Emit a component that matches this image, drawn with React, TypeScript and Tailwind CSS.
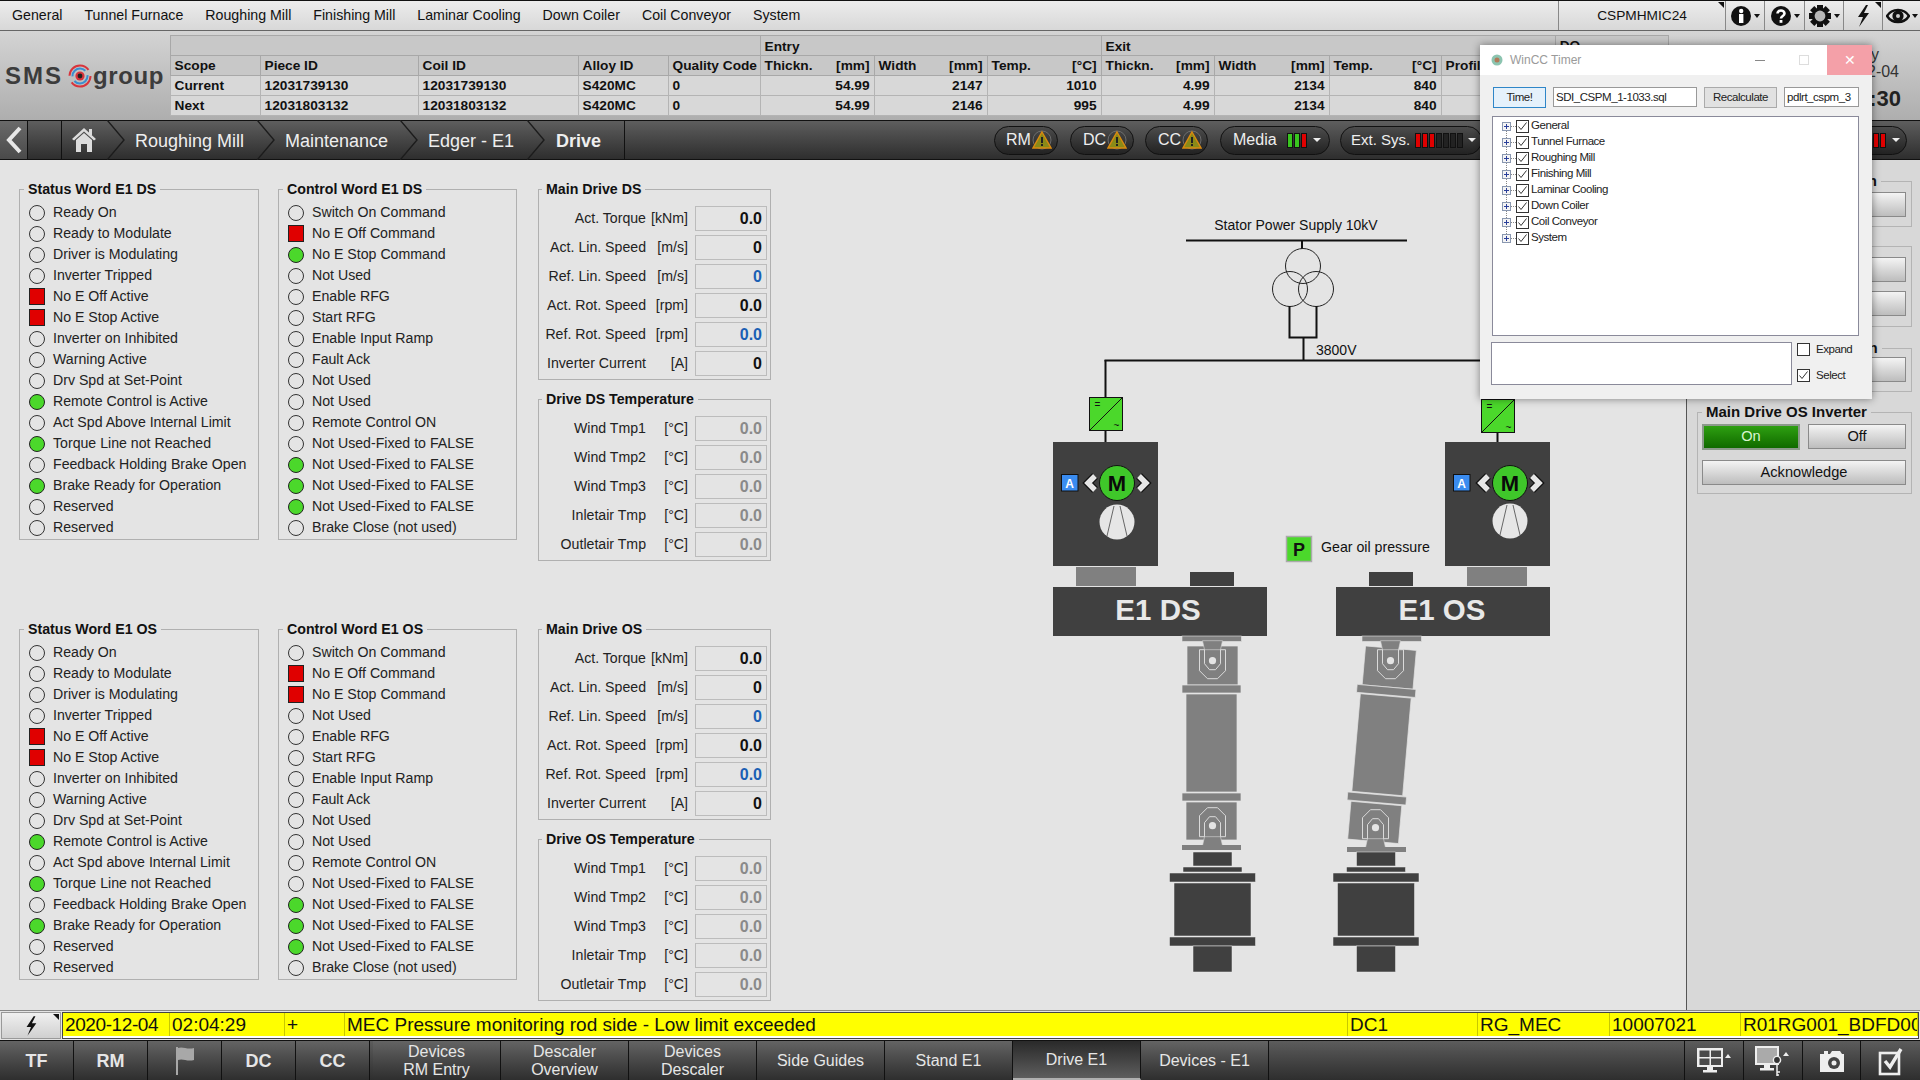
import React from "react";

type State = "off" | "red" | "green";
type Row = [string, State];

const menuItems = ["General", "Tunnel Furnace", "Roughing Mill", "Finishing Mill", "Laminar Cooling", "Down Coiler", "Coil Conveyor", "System"];

const statusRows = (limit: string): Row[] => [
  ["Ready On", "off"],
  ["Ready to Modulate", "off"],
  ["Driver is Modulating", "off"],
  ["Inverter Tripped", "off"],
  ["No E Off Active", "red"],
  ["No E Stop Active", "red"],
  ["Inverter on Inhibited", "off"],
  ["Warning Active", "off"],
  ["Drv Spd at Set-Point", "off"],
  ["Remote Control is Active", "green"],
  [limit, "off"],
  ["Torque Line not Reached", "green"],
  ["Feedback Holding Brake Open", "off"],
  ["Brake Ready for Operation", "green"],
  ["Reserved", "off"],
  ["Reserved", "off"],
];

const controlRows = (eStop: State): Row[] => [
  ["Switch On Command", "off"],
  ["No E Off Command", "red"],
  ["No E Stop Command", eStop],
  ["Not Used", "off"],
  ["Enable RFG", "off"],
  ["Start RFG", "off"],
  ["Enable Input Ramp", "off"],
  ["Fault Ack", "off"],
  ["Not Used", "off"],
  ["Not Used", "off"],
  ["Remote Control ON", "off"],
  ["Not Used-Fixed to FALSE", "off"],
  ["Not Used-Fixed to FALSE", "green"],
  ["Not Used-Fixed to FALSE", "green"],
  ["Not Used-Fixed to FALSE", "green"],
  ["Brake Close (not used)", "off"],
];

const driveRows = [
  { label: "Act. Torque", unit: "[kNm]", value: "0.0", tone: "text-[#111]" },
  { label: "Act. Lin. Speed", unit: "[m/s]", value: "0", tone: "text-[#111]" },
  { label: "Ref. Lin. Speed", unit: "[m/s]", value: "0", tone: "text-[#1a5fb4]" },
  { label: "Act. Rot. Speed", unit: "[rpm]", value: "0.0", tone: "text-[#111]" },
  { label: "Ref. Rot. Speed", unit: "[rpm]", value: "0.0", tone: "text-[#1a5fb4]" },
  { label: "Inverter Current", unit: "[A]", value: "0", tone: "text-[#111]" },
];

const tempRows = ["Wind Tmp1", "Wind Tmp2", "Wind Tmp3", "Inletair Tmp", "Outletair Tmp"].map((label) => ({
  label,
  unit: "[°C]",
  value: "0.0",
  tone: "text-[#8a8a8a]",
}));

const treeItems = ["General", "Tunnel Furnace", "Roughing Mill", "Finishing Mill", "Laminar Cooling", "Down Coiler", "Coil Conveyor", "System"];

function Indicator({ state }: { state: State }) {
  if (state === "red") return <span className="block w-[16px] h-[17px] bg-[#e00000] border border-[#222]" />;
  if (state === "green") return <span className="block w-[16px] h-[16px] rounded-full bg-[#4bd82b] border border-[#222]" />;
  return <span className="block w-[16px] h-[16px] rounded-full border border-[#333]" />;
}

function WordGroup({ title, rows, width }: { title: string; rows: Row[]; width: string }) {
  return (
    <fieldset className={`${width} h-[359px] border border-[#b0b0b0] px-[9px]`}>
      <legend className="-ml-[5px] px-[4px] h-[16px] leading-[16px] text-[14.2px] font-bold text-[#111]">{title}</legend>
      <div className="flex flex-col pt-[5px]">
        {rows.map(([label, state], i) => (
          <div key={i} className="flex items-center h-[21px] gap-[8px] text-[14.15px] text-[#222] whitespace-nowrap">
            <Indicator state={state} />
            <span>{label}</span>
          </div>
        ))}
      </div>
    </fieldset>
  );
}

function ValueGroup({ title, rows, height }: { title: string; rows: { label: string; unit: string; value: string; tone: string }[]; height: string }) {
  return (
    <fieldset className={`w-[233px] ${height} border border-[#b0b0b0]`}>
      <legend className="ml-[3px] px-[4px] h-[16px] leading-[16px] text-[14.2px] font-bold text-[#111]">{title}</legend>
      <div className="flex flex-col gap-[4px] pt-[9px]">
        {rows.map((r) => (
          <div key={r.label} className="flex items-center h-[25px] text-[14.15px] text-[#222] whitespace-nowrap">
            <span className="w-[107px] text-right">{r.label}</span>
            <span className="w-[42px] text-right">{r.unit}</span>
            <span className={`ml-[7px] w-[72px] h-[25px] leading-[24px] border border-[#bcbcbc] pr-[4px] text-right text-[16px] font-bold ${r.tone}`}>{r.value}</span>
          </div>
        ))}
      </div>
    </fieldset>
  );
}

function DriveSection({ side, limit, eStop }: { side: string; limit: string; eStop: State }) {
  return (
    <div className="flex h-[440px]">
      <WordGroup title={`Status Word E1 ${side}`} rows={statusRows(limit)} width="w-[240px]" />
      <div className="ml-[19px]">
        <WordGroup title={`Control Word E1 ${side}`} rows={controlRows(eStop)} width="w-[239px]" />
      </div>
      <div className="ml-[21px] flex flex-col gap-[11px]">
        <ValueGroup title={`Main Drive ${side}`} rows={driveRows} height="h-[199px]" />
        <ValueGroup title={`Drive ${side} Temperature`} rows={tempRows} height="h-[170px]" />
      </div>
    </div>
  );
}

function Joint({ x, y, flip }: { x: number; y: number; flip?: boolean }) {
  return (
    <g transform={`translate(${x} ${y}) scale(1 ${flip ? -1 : 1})`}>
      <polygon points="-10,-20 10,-20 8,-11 -8,-11" fill="#808080" stroke="#d8d8d8" strokeWidth="0.6" />
      <path d="M-13,-11 L-13,10 L-5,18 L5,18 L13,10 L13,-11 L8,-11 L8,3 L3,9 L-3,9 L-8,3 L-8,-11 Z" fill="none" stroke="#e4e4e4" strokeWidth="0.9" />
      <circle cx="0" cy="0" r="3.6" fill="#e4e4e4" />
    </g>
  );
}

// body of the cardan shaft, drawn at the DS position, the OS one gets tilted
function ShaftBody() {
  return (
    <g fill="#808080" stroke="#e4e4e4" strokeWidth="0.7">
      <rect x="1187" y="646" width="51" height="39" />
      <rect x="1182" y="685" width="59" height="8" />
      <rect x="1186" y="694" width="51" height="98" />
      <rect x="1182" y="793" width="59" height="8" />
      <rect x="1186" y="802" width="51" height="38" />
    </g>
  );
}

function DarkStack({ cx }: { cx: number }) {
  const parts: [number, number, number][] = [
    [39, 852, 14],
    [59, 867, 5],
    [86, 873, 9],
    [77, 883, 53],
    [86, 937, 9],
    [39, 946, 26],
  ];
  return (
    <g fill="#404040" stroke="#ececec" strokeWidth="0.5">
      {parts.map(([w, y, h]) => (
        <rect key={y} x={cx - w / 2} y={y} width={w} height={h} />
      ))}
    </g>
  );
}

function MotorUnit({ boxX, conv, convY, motor, fanY, tap }: { boxX: number; conv: number; convY: number; motor: number; fanY: number; tap: number }) {
  return (
    <g>
      <line x1={tap} y1="360" x2={tap} y2={convY} stroke="#111" strokeWidth="2" />
      <line x1={tap} y1={convY + 33} x2={tap} y2="442" stroke="#111" strokeWidth="2" />
      <rect x={conv} y={convY} width="33" height="33" fill="#4bd82b" stroke="#111" strokeWidth="1" />
      <line x1={conv} y1={convY + 33} x2={conv + 33} y2={convY} stroke="#111" strokeWidth="1" />
      <text x={conv + 8} y={convY + 10} fontSize="10" textAnchor="middle" fill="#111">=</text>
      <text x={conv + 27} y={convY + 31} fontSize="10" textAnchor="middle" fill="#111">~</text>
      <rect x={boxX} y="442" width="105" height="124" fill="#404040" />
      <rect x={boxX + 8.5} y="474.5" width="16.5" height="16.5" fill="#3a8cf0" stroke="#111" />
      <text x={boxX + 16.7} y="487.5" fontSize="12" fontWeight="700" textAnchor="middle" fill="#fff">A</text>
      <path d={`M${motor - 22},476 L${motor - 29},483 L${motor - 22},490`} fill="none" stroke="#111" strokeWidth="8" />
      <path d={`M${motor - 22},476 L${motor - 29},483 L${motor - 22},490`} fill="none" stroke="#e6e6e6" strokeWidth="5.4" />
      <path d={`M${motor + 22},476 L${motor + 29},483 L${motor + 22},490`} fill="none" stroke="#111" strokeWidth="8" />
      <path d={`M${motor + 22},476 L${motor + 29},483 L${motor + 22},490`} fill="none" stroke="#e6e6e6" strokeWidth="5.4" />
      <circle cx={motor} cy="483" r="17.5" fill="#3fc72a" stroke="#111" />
      <text x={motor} y="491" fontSize="22" fontWeight="700" textAnchor="middle" fill="#0a0a0a">M</text>
      <circle cx={motor} cy={fanY} r="17.5" fill="#e6e6e6" />
      <path d={`M${motor - 3},${fanY - 16} L${motor - 10},${fanY + 14} M${motor + 3},${fanY - 16} L${motor + 10},${fanY + 14}`} stroke="#666" strokeWidth="1" fill="none" />
    </g>
  );
}

function Diagram() {
  return (
    <svg className="block shrink-0" width="915" height="850" viewBox="771 160 915 850" fontFamily="'Liberation Sans', Arial, sans-serif">
      <text x="1296" y="230" fontSize="14" textAnchor="middle" fill="#111">Stator Power Supply 10kV</text>
      <line x1="1186" y1="240.5" x2="1407" y2="240.5" stroke="#111" strokeWidth="2" />
      <line x1="1302" y1="240" x2="1302" y2="249" stroke="#111" strokeWidth="2" />
      <g fill="none" stroke="#222" strokeWidth="1">
        <circle cx="1303" cy="266" r="17.5" />
        <circle cx="1290" cy="289" r="17.5" />
        <circle cx="1316" cy="289" r="17.5" />
      </g>
      <path d="M1289.5,306 L1289.5,337.5 L1316.5,337.5 L1316.5,306" fill="none" stroke="#111" strokeWidth="2" />
      <line x1="1303.5" y1="337" x2="1303.5" y2="360" stroke="#111" strokeWidth="2" />
      <line x1="1104.5" y1="360.5" x2="1498" y2="360.5" stroke="#111" strokeWidth="2" />
      <text x="1316" y="355" fontSize="14" fill="#111">3800V</text>

      <MotorUnit boxX={1053} conv={1089.5} convY={397.5} motor={1117} fanY={522} tap={1105.5} />
      <MotorUnit boxX={1445} conv={1481.5} convY={399.5} motor={1510} fanY={521} tap={1497.5} />

      <rect x="1286.5" y="536.5" width="25" height="25" fill="#4bd82b" stroke="#aaa" strokeWidth="1.5" />
      <text x="1299" y="556" fontSize="18" fontWeight="700" textAnchor="middle" fill="#111">P</text>
      <text x="1321" y="552" fontSize="14.2" fill="#111">Gear oil pressure</text>

      <rect x="1076" y="567" width="60" height="19" fill="#808080" />
      <rect x="1190" y="572" width="44" height="14" fill="#404040" />
      <rect x="1369" y="572" width="44" height="14" fill="#404040" />
      <rect x="1467" y="567" width="60" height="19" fill="#808080" />
      <rect x="1053" y="587" width="214" height="49" fill="#404040" />
      <rect x="1336" y="587" width="214" height="49" fill="#404040" />
      <text x="1158" y="620" fontSize="29.5" fontWeight="700" textAnchor="middle" fill="#e8e8e8">E1 DS</text>
      <text x="1442" y="620" fontSize="29.5" fontWeight="700" textAnchor="middle" fill="#e8e8e8">E1 OS</text>

      <rect x="1182" y="636" width="59.5" height="5.5" fill="#808080" stroke="#e8e8e8" strokeWidth="0.6" />
      <ShaftBody />
      <Joint x={1212.5} y={660.7} />
      <Joint x={1212.5} y={825.7} flip />
      <rect x="1182" y="845" width="59" height="5" fill="#808080" />
      <DarkStack cx={1212.5} />

      <rect x="1362" y="636" width="59.5" height="5.5" fill="#808080" stroke="#e8e8e8" strokeWidth="0.6" />
      <g transform="translate(1382.5 745) rotate(5) translate(-1212.5 -743.2)">
        <ShaftBody />
      </g>
      <Joint x={1390.5} y={660.7} />
      <Joint x={1375.5} y={827.7} flip />
      <rect x="1347" y="847" width="59" height="5" fill="#808080" />
      <DarkStack cx={1376} />
    </svg>
  );
}

function GrayButton({ label, className }: { label: string; className: string }) {
  return (
    <div className={`${className} h-[25px] flex items-center justify-center border border-[#8a8a8a] bg-linear-to-b from-[#f4f4f4] to-[#bdbdbd] text-[14.6px] text-[#111]`}>
      {label}
    </div>
  );
}

function SideGroup({ title, height, mt, legendClass, children }: { title: string; height: string; mt: string; legendClass: string; children: React.ReactNode }) {
  return (
    <fieldset className={`w-[215px] ${height} ${mt} border border-[#b4b4b4] pl-[4px] pr-[5px]`}>
      <legend className={`${legendClass} px-[4px] h-[16px] leading-[16px] text-[15px] font-bold text-[#111] whitespace-nowrap`}>{title}</legend>
      {children}
    </fieldset>
  );
}

function RightPanel() {
  return (
    <div className="w-[234px] h-full border-l border-[#555] bg-[#d8d8d8] pl-[10px] pt-[13px]">
      <SideGroup title="Main Drive DS Operation" height="h-[54px]" mt="mt-0" legendClass="-ml-[5px]">
        <GrayButton label="On" className="w-[204px] mt-[3px]" />
      </SideGroup>
      <SideGroup title="Main Drive DS Inverter" height="h-[89px]" mt="mt-[11px]" legendClass="ml-0">
        <div className="flex flex-col gap-[9px] pt-[3px]">
          <GrayButton label="On" className="w-[204px]" />
          <GrayButton label="Off" className="w-[204px]" />
        </div>
      </SideGroup>
      <SideGroup title="Main Drive OS Operation" height="h-[52px]" mt="mt-[13px]" legendClass="-ml-[5px]">
        <GrayButton label="On" className="w-[204px] mt-[1px]" />
      </SideGroup>
      <SideGroup title="Main Drive OS Inverter" height="h-[90px]" mt="mt-[12px]" legendClass="ml-0">
        <div className="flex gap-[8px] pt-[4px]">
          <div className="w-[98px] h-[26px] flex items-center justify-center border-2 border-[#8c9a8c] bg-linear-to-b from-[#2ea012] to-[#0f6a00] text-[14.6px] text-[#d9f5d0]">On</div>
          <GrayButton label="Off" className="w-[98px]" />
        </div>
        <GrayButton label="Acknowledge" className="w-[204px] mt-[10px]" />
      </SideGroup>
    </div>
  );
}

function Corner() {
  return <span className="absolute top-[1px] right-[1px] w-0 h-0 border-l-[6px] border-l-transparent border-t-[6px] border-t-[#111]" />;
}

function TopIcon({ children, width }: { children: React.ReactNode; width: string }) {
  return <div className={`${width} relative flex items-center justify-center gap-[2px] border-l border-[#888] bg-linear-to-b from-[#ececec] to-[#d4d4d4]`}>{children}</div>;
}

function MiniArrow() {
  return <span className="w-0 h-0 border-x-[3px] border-x-transparent border-t-[4px] border-t-[#111]" />;
}

function MenuBar() {
  return (
    <div className="h-[31px] flex border-t border-[#111] border-b border-b-[#666] bg-linear-to-b from-[#ececec] to-[#d8d8d8] text-[14.2px] text-[#111]">
      <div className="w-[1558px] flex items-center pl-[12px] pt-[1px] gap-[22px] whitespace-nowrap">
        {menuItems.map((m) => (
          <span key={m}>{m}</span>
        ))}
      </div>
      <div className="w-[167px] relative flex items-center justify-center pt-[1px] text-[13.7px] border-l border-[#888]">
        CSPMHMIC24
        <Corner />
      </div>
      <TopIcon width="w-[39px]">
        <svg width="22" height="22" viewBox="0 0 22 22">
          <circle cx="11" cy="11" r="10" fill="#111" />
          <rect x="9" y="9" width="4.4" height="9" fill="#fff" />
          <circle cx="11.2" cy="6" r="2.2" fill="#fff" />
        </svg>
        <MiniArrow />
      </TopIcon>
      <TopIcon width="w-[40px]">
        <svg width="22" height="22" viewBox="0 0 22 22">
          <circle cx="11" cy="11" r="10" fill="#111" />
          <path d="M7.5,8.5 C7.5,4.5 14.5,4.5 14.5,8.5 C14.5,11 11,11 11,13.5" fill="none" stroke="#fff" strokeWidth="2.6" />
          <rect x="9.6" y="15" width="2.8" height="2.8" fill="#fff" />
        </svg>
        <MiniArrow />
      </TopIcon>
      <TopIcon width="w-[39px]">
        <svg width="24" height="24" viewBox="0 0 24 24">
          <g fill="#111">
            {[0, 45, 90, 135].map((a) => (
              <rect key={a} x="9" y="1" width="6" height="22" transform={`rotate(${a} 12 12)`} />
            ))}
          </g>
          <circle cx="12" cy="12" r="8" fill="#111" />
          <circle cx="12" cy="12" r="5.4" fill="#b8b8b8" />
        </svg>
        <MiniArrow />
      </TopIcon>
      <TopIcon width="w-[39px]">
        <svg width="18" height="24" viewBox="0 0 18 24">
          <path d="M12,1 L4,13 L9,13 L5,23 L15,9 L10,9 L14,1 Z" fill="#111" />
        </svg>
        <Corner />
      </TopIcon>
      <TopIcon width="w-[38px]">
        <svg width="24" height="18" viewBox="0 0 24 18">
          <path d="M1,9 C6,1 18,1 23,9 C18,17 6,17 1,9 Z" fill="none" stroke="#111" strokeWidth="2.4" />
          <circle cx="12" cy="9" r="5.6" fill="#111" />
          <circle cx="12" cy="9" r="2" fill="#ccc" />
        </svg>
        <MiniArrow />
      </TopIcon>
    </div>
  );
}

function LogoMark() {
  return (
    <svg width="24" height="24" viewBox="0 0 24 24" className="shrink-0">
      <circle cx="12" cy="12" r="10.5" fill="none" stroke="#d8343c" strokeWidth="2" strokeDasharray="26 7" />
      <circle cx="12" cy="12" r="7.5" fill="none" stroke="#3a8fd0" strokeWidth="2" strokeDasharray="18 5" />
      <circle cx="12" cy="12" r="4.6" fill="#d8343c" />
      <circle cx="12" cy="12" r="2.4" fill="#222" />
    </svg>
  );
}

const tableCols = [90, 158, 160, 90, 92, 114, 113, 114, 113, 115, 112, 114, 113];

function Th({ label, unit, className = "" }: { label: string; unit?: string; className?: string }) {
  return (
    <th className={`border border-[#a8a8a8] bg-[#c8c8c8] px-[4px] h-[20px] font-bold text-left overflow-hidden whitespace-nowrap ${className}`}>
      {unit ? (
        <span className="flex justify-between">
          <span>{label}</span>
          <span>{unit}</span>
        </span>
      ) : (
        label
      )}
    </th>
  );
}

function Td({ v, right }: { v?: string; right?: boolean }) {
  return <td className={`border border-[#b4b4b4] bg-[#d8d8d8] px-[4px] h-[20px] font-bold whitespace-nowrap ${right ? "text-right" : "text-left"}`}>{v}</td>;
}

function ProcessTable() {
  const rows = [
    ["Current", "12031739130", "12031739130", "S420MC", "0", "54.99", "2147", "1010", "4.99", "2134", "840"],
    ["Next", "12031803132", "12031803132", "S420MC", "0", "54.99", "2146", "995", "4.99", "2134", "840"],
  ];
  return (
    <table className="table-fixed border-collapse w-[1498px] h-fit text-[13.7px] leading-[15px] text-[#111]">
      <colgroup>
        {tableCols.map((w, i) => (
          <col key={i} span={1} style={{ width: w }} />
        ))}
      </colgroup>
      <tbody>
        <tr>
          <Th label="" className="border-r-0" />
          <Th label="" className="border-x-0" />
          <Th label="" className="border-x-0" />
          <Th label="" className="border-x-0" />
          <Th label="" className="border-l-0" />
          <th colSpan={3} className="border border-[#a8a8a8] bg-[#c8c8c8] px-[4px] pt-[2px] font-bold text-left">Entry</th>
          <th colSpan={4} className="border border-[#a8a8a8] bg-[#c8c8c8] px-[4px] pt-[2px] font-bold text-left">Exit</th>
          <Th label="DQ" />
        </tr>
        <tr>
          <Th label="Scope" className="border-[#808080]" />
          <Th label="Piece ID" />
          <Th label="Coil ID" />
          <Th label="Alloy ID" />
          <Th label="Quality Code" />
          <Th label="Thickn." unit="[mm]" />
          <Th label="Width" unit="[mm]" />
          <Th label="Temp." unit="[°C]" />
          <Th label="Thickn." unit="[mm]" />
          <Th label="Width" unit="[mm]" />
          <Th label="Temp." unit="[°C]" />
          <Th label="Profile" />
          <Th label="" />
        </tr>
        {rows.map((r) => (
          <tr key={r[0]}>
            {r.map((v, i) => (
              <Td key={i} v={v} right={i > 4} />
            ))}
            <Td />
            <Td />
          </tr>
        ))}
      </tbody>
    </table>
  );
}

function Header() {
  return (
    <div className="h-[89px] flex items-start bg-linear-to-b from-[#d4d4d4] to-[#aeaeae] pt-[4px]">
      <div className="w-[170px] h-[85px] flex items-center pl-[5px] pb-[4px] text-[24px] font-bold text-[#3c3c3c]">
        <span className="w-[63px] tracking-[2px]">SMS</span>
        <LogoMark />
        <span className="ml-[1px] tracking-[0.6px]">group</span>
      </div>
      <ProcessTable />
      <div className="w-[252px] pr-[19px] text-right text-[#333]">
        <div className="text-[16px] leading-[20px] pt-[10px] pr-[22px]">Friday</div>
        <div className="text-[16px] leading-[20px] -mt-[3px] pr-[2px]">2020-12-04</div>
        <div className="text-[22px] leading-[28px] font-bold text-[#222] mt-[3px]">02:04:30</div>
      </div>
    </div>
  );
}

function Crumb({ label, width, bold }: { label: string; width: string; bold?: boolean }) {
  return <div className={`${width} pl-[10px] pt-[2px] flex items-center text-[18px] text-[#eeeeee] whitespace-nowrap ${bold ? "font-bold" : ""}`}>{label}</div>;
}

function Chevron() {
  return (
    <svg width="18" height="40" viewBox="0 0 18 40" className="shrink-0">
      <path d="M0,0 L17,20 L0,40" fill="none" stroke="#1c1c1c" strokeWidth="1.4" />
    </svg>
  );
}

function WarnTriangle() {
  return (
    <svg width="20" height="20" viewBox="0 0 20 20" className="shrink-0">
      <circle cx="10" cy="10" r="9" fill="none" stroke="#777" strokeWidth="0.8" />
      <polygon points="10,2 19,18 1,18" fill="#8a8a18" stroke="#d98a10" strokeWidth="1.4" />
      <rect x="9" y="7" width="2" height="6" fill="#222" />
      <rect x="9" y="14" width="2" height="2" fill="#222" />
    </svg>
  );
}

function Bars({ colors }: { colors: string[] }) {
  return (
    <span className="flex gap-[1px]">
      {colors.map((c, i) => (
        <span key={i} className={`block w-[6px] h-[15px] border border-[#111] ${c}`} />
      ))}
    </span>
  );
}

function WhiteArrow() {
  return <span className="w-0 h-0 border-x-[4px] border-x-transparent border-t-[4px] border-t-[#eee]" />;
}

function Pill({ className, children }: { className: string; children: React.ReactNode }) {
  return (
    <div className={`${className} h-[29px] flex items-center rounded-full border border-[#111] bg-linear-to-b from-[#4c4c4c] to-[#222] text-[16px] text-[#eeeeee] whitespace-nowrap`}>
      {children}
    </div>
  );
}

function Breadcrumb() {
  return (
    <div className="h-[40px] flex items-center border-y border-[#111] bg-linear-to-b from-[#5e5e5e] to-[#2e2e2e]">
      <div className="w-[28px] h-full flex items-center justify-center border-r border-[#111] bg-linear-to-b from-[#6a6a6a] to-[#4a4a4a]">
        <svg width="18" height="28" viewBox="0 0 18 28">
          <path d="M15,2 L4,14 L15,26" fill="none" stroke="#e8e8e8" strokeWidth="4" />
        </svg>
      </div>
      <div className="w-[34px] h-full border-r border-[#111]" />
      <div className="w-[45px] h-full flex items-center pl-[9px]">
        <svg width="26" height="26" viewBox="0 0 26 26">
          <path d="M13,1 L25,12 L23,13.5 L13,4.5 L3,13.5 L1,12 Z" fill="#dcdcdc" />
          <path d="M5,13 L13,6 L21,13 L21,25 L16,25 L16,17 L10,17 L10,25 L5,25 Z" fill="#dcdcdc" />
          <rect x="18" y="2" width="3" height="6" fill="#dcdcdc" />
        </svg>
      </div>
      <Chevron />
      <Crumb label="Roughing Mill" width="w-[132px]" />
      <Chevron />
      <Crumb label="Maintenance" width="w-[125px]" />
      <Chevron />
      <Crumb label="Edger - E1" width="w-[109px]" />
      <Chevron />
      <div className="w-[80px] h-full flex items-center pl-[11px] pt-[2px] text-[18px] font-bold text-[#eeeeee] border-r border-[#111]">Drive</div>
      <div className="flex items-center ml-[369px]">
        <Pill className="w-[64px] pl-[11px] gap-[1px]">RM<WarnTriangle /></Pill>
        <Pill className="w-[64px] ml-[12px] pl-[12px] gap-[1px]">DC<WarnTriangle /></Pill>
        <Pill className="w-[63px] ml-[11px] pl-[12px] gap-[1px]">CC<WarnTriangle /></Pill>
        <Pill className="w-[110px] ml-[12px] pl-[12px] gap-[10px]">
          Media
          <span className="flex items-center gap-[6px]">
            <Bars colors={["bg-[#39c51f]", "bg-[#39c51f]", "bg-[#e00000]"]} />
            <WhiteArrow />
          </span>
        </Pill>
        <Pill className="w-[142px] ml-[10px] pl-[10px] gap-[5px]">
          <span className="text-[15px]">Ext. Sys.</span>
          <Bars colors={["bg-[#e00000]", "bg-[#e00000]", "bg-[#e00000]", "bg-[#222]", "bg-[#222]", "bg-[#222]", "bg-[#222]"]} />
          <WhiteArrow />
        </Pill>
        <Pill className="w-[415px] ml-[10px] pl-[380px] gap-[6px]">
          <Bars colors={["bg-[#e00000]", "bg-[#e00000]"]} />
          <WhiteArrow />
        </Pill>
      </div>
    </div>
  );
}

function AlarmCell({ width, text, extra = "" }: { width: string; text: string; extra?: string }) {
  return <div className={`${width} h-full pl-[2px] border-r border-[#c8c800] whitespace-nowrap overflow-hidden ${extra}`}>{text}</div>;
}

function AlarmBar() {
  return (
    <div className="h-[30px] flex bg-[#e4e4e4] border-t border-[#888] pt-[1px]">
      <div className="w-[60px] h-[27px] ml-[1px] relative flex items-center justify-center border border-[#999] bg-linear-to-b from-[#f0f0f0] to-[#d0d0d0]">
        <svg width="16" height="22" viewBox="0 0 18 24">
          <path d="M12,1 L4,13 L9,13 L5,23 L15,9 L10,9 L14,1 Z" fill="#111" />
        </svg>
        <Corner />
      </div>
      <div className="w-[1857px] h-[27px] ml-[1px] border border-[#444] bg-white">
        <div className="h-[23px] flex bg-[#ffff00] text-[19px] leading-[24px] text-[#111]">
          <AlarmCell width="w-[107px]" text="2020-12-04" extra="tracking-[-0.4px]" />
          <AlarmCell width="w-[115px]" text="02:04:29" />
          <AlarmCell width="w-[60px]" text="+" />
          <AlarmCell width="w-[1003px]" text="MEC Pressure monitoring rod side - Low limit exceeded" />
          <AlarmCell width="w-[130px]" text="DC1" />
          <AlarmCell width="w-[132px]" text="RG_MEC" />
          <AlarmCell width="w-[131px]" text="10007021" />
          <AlarmCell width="w-[177px]" text="R01RG001_BDFD00" />
        </div>
      </div>
    </div>
  );
}

function NavTab({ width, lines, active, bold }: { width: string; lines: string[]; active?: boolean; bold?: boolean }) {
  return (
    <div
      className={`${width} h-full flex flex-col items-center justify-center border-r border-[#111] leading-[18px] text-[#e6e6e6] ${bold ? "text-[18px] font-bold" : "text-[16px]"} ${
        active ? "bg-linear-to-b from-[#2a2a2a] to-[#5e5e5e] border-b-2 border-b-[#b0b0b0]" : "bg-linear-to-b from-[#646464] to-[#2e2e2e]"
      }`}
    >
      {lines.map((l) => (
        <span key={l} className="whitespace-nowrap">{l}</span>
      ))}
    </div>
  );
}

function NavBar() {
  return (
    <div className="h-[40px] flex border-t border-[#111] bg-linear-to-b from-[#5c5c5c] to-[#2e2e2e]">
      <NavTab width="w-[74px]" lines={["TF"]} bold />
      <NavTab width="w-[74px]" lines={["RM"]} bold />
      <div className="w-[74px] h-full flex items-center justify-center border-r border-[#111] bg-linear-to-b from-[#646464] to-[#2e2e2e]">
        <svg width="22" height="30" viewBox="0 0 22 30">
          <rect x="2" y="1" width="2" height="28" fill="#a8a8a8" />
          <path d="M4,2 C9,0 13,4 20,2 L20,14 C13,16 9,12 4,14 Z" fill="#a8a8a8" />
        </svg>
      </div>
      <NavTab width="w-[74px]" lines={["DC"]} bold />
      <NavTab width="w-[74px]" lines={["CC"]} bold />
      <div className="w-[3px]" />
      <NavTab width="w-[128px]" lines={["Devices", "RM Entry"]} />
      <NavTab width="w-[128px]" lines={["Descaler", "Overview"]} />
      <NavTab width="w-[128px]" lines={["Devices", "Descaler"]} />
      <NavTab width="w-[128px]" lines={["Side Guides"]} />
      <NavTab width="w-[128px]" lines={["Stand E1"]} />
      <NavTab width="w-[128px]" lines={["Drive E1"]} active />
      <NavTab width="w-[128px]" lines={["Devices - E1"]} />
      <div className="w-[416px] h-full border-r border-[#111]" />
      <div className="w-[59px] h-full flex items-center justify-center border-r border-[#111]">
        <svg width="36" height="28" viewBox="0 0 36 28">
          <rect x="1" y="1" width="26" height="19" fill="#eee" />
          <rect x="3.5" y="3.5" width="10" height="6.5" fill="#4a4a4a" />
          <rect x="15" y="3.5" width="10" height="6.5" fill="#4a4a4a" />
          <rect x="3.5" y="11.5" width="10" height="6.5" fill="#4a4a4a" />
          <rect x="15" y="11.5" width="10" height="6.5" fill="#4a4a4a" />
          <rect x="11" y="20" width="6" height="3" fill="#eee" />
          <rect x="7" y="23" width="14" height="2.5" fill="#eee" />
          <polygon points="32,7 35,11 29,11" fill="#eee" />
        </svg>
      </div>
      <div className="w-[59px] h-full flex items-center justify-center border-r border-[#111]">
        <svg width="36" height="32" viewBox="0 0 36 32">
          <rect x="1" y="2" width="22" height="17" fill="#aaa" stroke="#eee" strokeWidth="2" />
          <rect x="9" y="20" width="6" height="3" fill="#eee" />
          <rect x="5" y="23" width="14" height="2.5" fill="#eee" />
          <circle cx="22" cy="15" r="3.6" fill="#333" stroke="#eee" strokeWidth="1.4" />
          <path d="M22,19 L22,31 M22,27 L25,27 M22,30 L24,30" stroke="#eee" strokeWidth="1.5" />
          <polygon points="31,7 34,11 28,11" fill="#eee" />
        </svg>
      </div>
      <div className="w-[58px] h-full flex items-center justify-center border-r border-[#111]">
        <svg width="26" height="24" viewBox="0 0 26 24">
          <path d="M1,5 L5,5 L5,2 L9,2 L9,5 L11,5 L13,2 L21,2 L23,5 L25,5 L25,23 L1,23 Z" fill="#eee" />
          <circle cx="15" cy="14" r="6" fill="#444" />
          <circle cx="15" cy="14" r="2.5" fill="#eee" />
        </svg>
      </div>
      <div className="w-[59px] h-full flex items-center justify-center">
        <svg width="26" height="30" viewBox="0 0 26 30">
          <rect x="2" y="7" width="19" height="21" fill="none" stroke="#eee" strokeWidth="2.6" />
          <path d="M7,15 L12,21 L23,3" fill="none" stroke="#eee" strokeWidth="3.4" />
        </svg>
      </div>
    </div>
  );
}

function PlusBox() {
  return (
    <svg width="9" height="9" viewBox="0 0 9 9" className="shrink-0">
      <rect x="0.5" y="0.5" width="8" height="8" fill="#f4f4f4" stroke="#8a98b0" />
      <path d="M2,4.5 L7,4.5 M4.5,2 L4.5,7" stroke="#2a3f9a" />
    </svg>
  );
}

function CheckBox({ checked }: { checked: boolean }) {
  return (
    <span className="block w-[13px] h-[13px] border border-[#333] bg-white shrink-0">
      {checked && (
        <svg width="11" height="11" viewBox="0 0 11 11">
          <path d="M1.5,5.5 L4,8.5 L9.5,1.5" fill="none" stroke="#333" strokeWidth="1" />
        </svg>
      )}
    </span>
  );
}

function TimerWindow() {
  return (
    <div className="absolute left-[1480px] top-[45px] w-[392px] h-[354px] bg-[#f0f0f0] shadow-[0_0_8px_rgba(0,0,0,0.45)] text-[11.5px] tracking-[-0.45px] text-[#222]">
      <div className="h-[30px] flex items-center bg-white">
        <svg width="14" height="14" viewBox="0 0 14 14" className="ml-[10px]">
          <circle cx="7" cy="7" r="5.5" fill="#8cc4b0" />
          <circle cx="7" cy="7" r="2.5" fill="#b07a5a" />
        </svg>
        <span className="ml-[6px] text-[12px] tracking-normal text-[#9a9a9a]">WinCC Timer</span>
        <div className="ml-auto w-[10px] h-px bg-[#888] mr-[34px]" />
        <div className="w-[10px] h-[10px] border border-[#ddd] mr-[18px]" />
        <div className="w-[45px] h-full flex items-center justify-center bg-[#f4a0a8] text-white text-[14px]">✕</div>
      </div>
      <div className="flex pl-[13px] pr-[13px] pt-[12px] gap-[7px]">
        <div className="w-[53px] h-[21px] flex items-center justify-center border border-[#2f86c8] bg-[#e5f1fb]">Time!</div>
        <div className="w-[144px] h-[20px] leading-[18px] pl-[2px] border border-[#999] bg-white">SDI_CSPM_1-1033.sql</div>
        <div className="w-[73px] h-[21px] flex items-center justify-center border border-[#aaa] bg-[#e1e1e1]">Recalculate</div>
        <div className="w-[75px] h-[20px] leading-[18px] pl-[2px] border border-[#999] bg-white">pdlrt_cspm_3</div>
      </div>
      <div className="relative ml-[12px] mt-[8px] w-[367px] h-[220px] border border-[#8a8a9a] bg-white pl-[9px] pt-[1px]">
        <span className="absolute left-[13px] top-[11px] h-[112px] border-l border-dotted border-[#888]" />
        {treeItems.map((t) => (
          <div key={t} className="relative flex items-center h-[16px]">
            <PlusBox />
            <span className="w-[5px] border-t border-dotted border-[#888]" />
            <CheckBox checked />
            <span className="ml-[2px] whitespace-nowrap">{t}</span>
          </div>
        ))}
      </div>
      <div className="flex ml-[11px] mt-[6px]">
        <div className="w-[301px] h-[43px] border border-[#8a8a9a] bg-white" />
        <div className="ml-[5px] flex flex-col gap-[13px] pt-[1px]">
          <div className="flex items-center h-[13px] gap-[6px]">
            <CheckBox checked={false} />
            <span>Expand</span>
          </div>
          <div className="flex items-center h-[13px] gap-[6px]">
            <CheckBox checked />
            <span>Select</span>
          </div>
        </div>
      </div>
    </div>
  );
}

export default function App() {
  return (
    <div className="relative w-[1920px] h-[1080px] overflow-hidden flex flex-col bg-[#e4e4e4] font-['Liberation_Sans',Arial,sans-serif]">
      <MenuBar />
      <Header />
      <Breadcrumb />
      <div className="h-[850px] flex">
        <div className="w-[771px] shrink-0 pl-[19px] pt-[21px]">
          <DriveSection side="DS" limit="Act Spd Above Internal Limit" eStop="green" />
          <DriveSection side="OS" limit="Act Spd above Internal Limit" eStop="red" />
        </div>
        <Diagram />
        <RightPanel />
      </div>
      <AlarmBar />
      <NavBar />
      <TimerWindow />
    </div>
  );
}
